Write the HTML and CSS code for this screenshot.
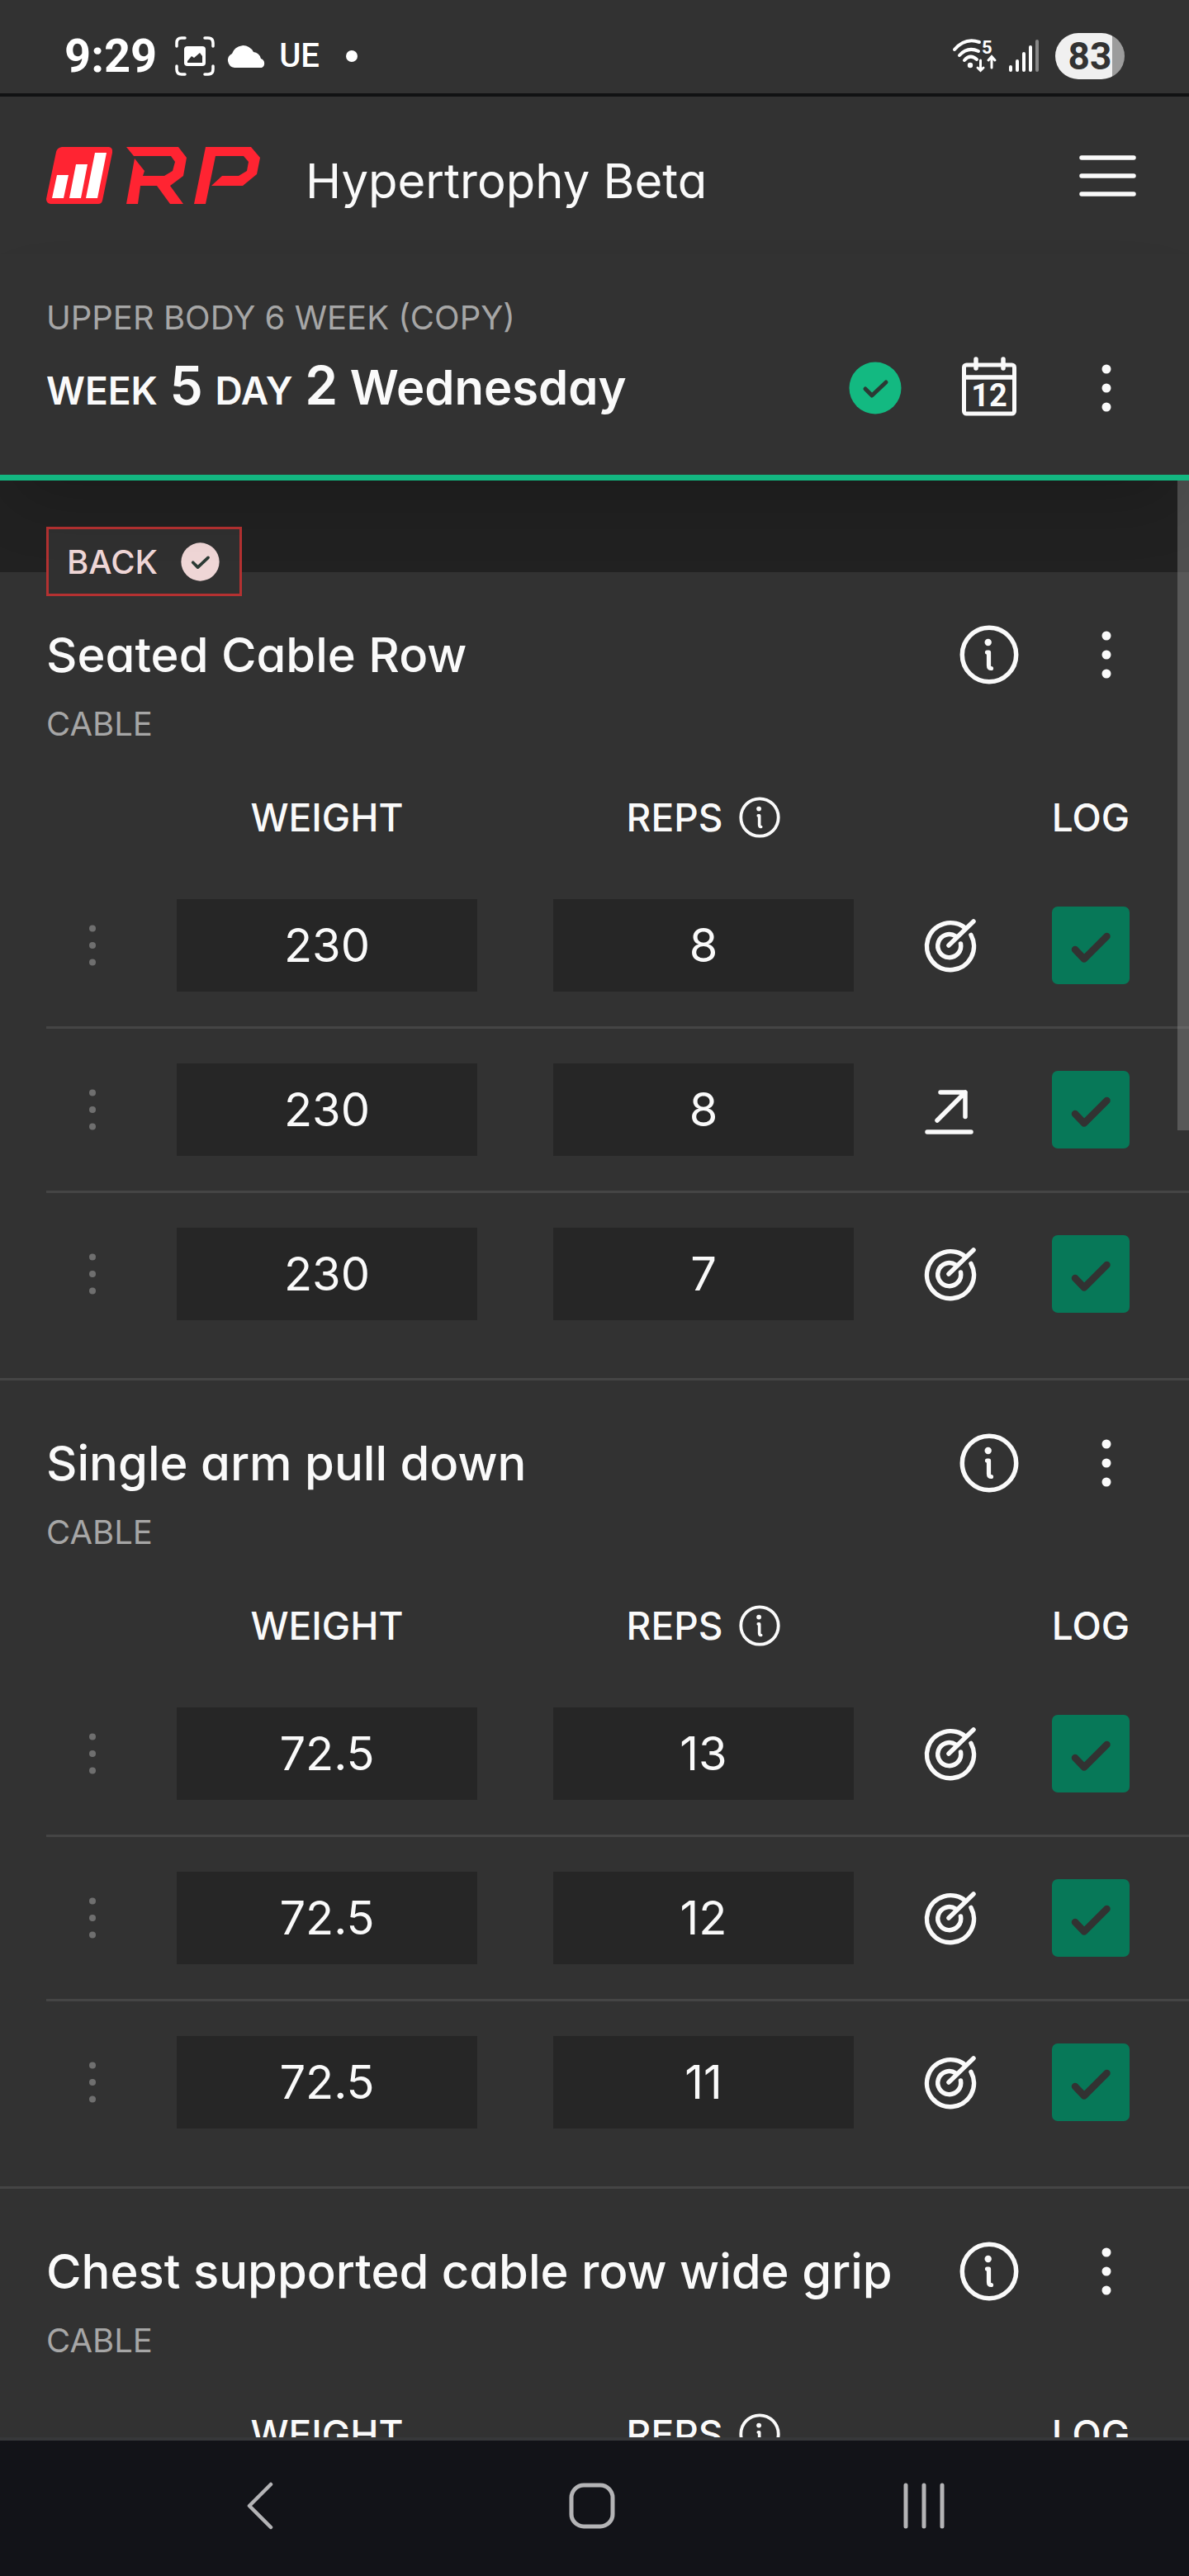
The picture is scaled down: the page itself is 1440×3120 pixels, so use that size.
FILE: index.html
```html
<!DOCTYPE html>
<html lang="en">
<head>
<meta charset="utf-8">
<meta name="viewport" content="width=device-width, initial-scale=1">
<title>Hypertrophy Beta</title>
<link rel="stylesheet" href="styles.css">
</head>
<body>
<svg class="sprite" aria-hidden="true">
  <symbol id="dots" viewBox="0 0 72 72"><g fill="currentColor"><circle cx="36" cy="13" r="5.5"/><circle cx="36" cy="36" r="5.5"/><circle cx="36" cy="59" r="5.5"/></g></symbol>
  <symbol id="grip" viewBox="0 0 56 56"><g fill="currentColor"><circle cx="28" cy="7.500" r="4"/><circle cx="28" cy="28" r="4"/><circle cx="28" cy="48.500" r="4"/></g></symbol>
  <symbol id="info" viewBox="0 0 72 72"><g fill="none" stroke="currentColor" stroke-linecap="round" stroke-linejoin="round"><circle cx="36" cy="36" r="32.700" stroke-width="5.500"/><path d="M33.500 33H35.500V49Q35.500 52.500 38.500 52.500" stroke-width="5.200"/></g><circle cx="34.700" cy="21" r="4.200" fill="currentColor"/></symbol>
  <symbol id="target" viewBox="0 0 72 72"><g fill="none" stroke="currentColor" stroke-width="5.500" stroke-linecap="round"><path d="M55.500 15.500A28.500 28.500 0 1 0 62 23.500"/><path d="M43.500 25A14 14 0 1 0 49.500 34"/><path d="M35 36L65 7"/></g></symbol>
  <symbol id="arrow" viewBox="0 0 72 72"><g fill="none" stroke="currentColor" stroke-width="5.500" stroke-linecap="round" stroke-linejoin="round"><path d="M25 15H55V44.500M55 15L21 49M9 63H62"/></g></symbol>
  <symbol id="tick" viewBox="0 0 94 94"><path d="M28 52L39 63.500L66.500 36" fill="none" stroke="#323232" stroke-width="8.500" stroke-linecap="round" stroke-linejoin="round"/></symbol>
  <symbol id="done" viewBox="0 0 64 64"><circle cx="32" cy="32" r="31.500" fill="currentColor"/><path d="M20 33L28 41L45 25" fill="none" stroke="#2b3a34" stroke-width="5" stroke-linecap="round" stroke-linejoin="round"/></symbol>
</svg>

<div class="status-bar">
  <div class="status-left">
    <span class="clock">9:29</span>
    <svg class="i-shot" width="48" height="48" viewBox="0 0 48 48"><path d="M2 12V8Q2 2 8 2H12M36 2H40Q46 2 46 8V12M46 36V40Q46 46 40 46H36M12 46H8Q2 46 2 40V36" fill="none" stroke="#fff" stroke-width="3.500" stroke-linecap="round"/><rect x="11" y="12" width="26" height="24" rx="4" fill="#fff"/><path d="M15 30L20 24L23 26L30 20L33 24V32H15Z" fill="#323232"/></svg>
    <svg width="50" height="28" viewBox="0 0 50 28"><path d="M10 28A9 9 0 0 1 7 11A14 14 0 0 1 33 9A10 10 0 0 1 42 17A6 6 0 0 1 43 28Z" fill="#fff"/></svg>
    <span class="carrier">UE</span>
    <svg width="14" height="14" viewBox="0 0 14 14"><circle cx="7" cy="7" r="7" fill="#fff"/></svg>
  </div>
  <div class="status-right">
    <svg class="i-wifi" width="54" height="42" viewBox="0 0 54 42"><g fill="none" stroke="#fff" stroke-width="4" stroke-linecap="round"><path d="M2 13Q15 -2 32 4"/><path d="M8 20Q18 9 31 15"/><path d="M14 26Q21 18 29 25"/><path d="M33.500 26V38M30 35L33.500 38.500L37 35M47 35V22M43 26L47 21.500L51 26" stroke-width="3"/></g><circle cx="21" cy="32" r="3.200" fill="#fff"/><text x="35" y="18" class="wifi-band">5</text></svg>
    <svg width="36" height="42" viewBox="0 0 36 42"><g stroke="#fff" stroke-width="4" stroke-linecap="round"><path d="M2 34V38M10 27V38M18 18V38M26 10V38"/><path d="M34 3V38" stroke="#888"/></g></svg>
    <span class="battery">83</span>
  </div>
</div>

<header class="app-header">
  <svg class="logo" width="260" height="70" viewBox="56 178 260 70" role="img" aria-label="RP">
    <g fill="#ff2432">
      <path d="M75 178H132Q137 179 136 185L124 243Q123 247 119 247H61Q56 246 56 241L68 184Q69 179 75 178Z"/>
      <path d="M153 178H216L226 191L222 213L206 225L222 247H206L190 225H170L167 247H153L163 192L175 207L173 213H199L209 207L212 196L207 189H162Z"/>
      <path d="M249 178H304L315 191L311 211L294 225H256L269 213H289L299 207L301 196L295 189H261L249 247H235Z"/>
    </g>
    <path d="M69 212H83L77 240H63ZM92 199H106L98 240H84ZM115 185H129L118 240H104Z" fill="#fff"/>
  </svg>
  <span class="app-name">Hypertrophy Beta</span>
  <button class="icon-btn" aria-label="Menu"><svg viewBox="0 0 72 72"><path d="M6 14H69M6 36H69M6 58H69" stroke="currentColor" stroke-width="5.500" stroke-linecap="round"/></svg></button>
</header>

<section class="workout">
  <p class="caption">UPPER BODY 6 WEEK (COPY)</p>
  <div class="title-row">
    <h1 class="day"><span class="day-label">WEEK</span> <span class="day-number">5</span> <span class="day-label">DAY</span> <span class="day-number">2</span> Wednesday</h1>
    <svg class="complete"><use href="#done"/></svg>
    <button class="icon-btn" aria-label="Calendar"><svg viewBox="0 0 72 72"><rect x="5.500" y="8" width="61" height="59" rx="3" fill="none" stroke="currentColor" stroke-width="5"/><path d="M6 23H66M20 1V12M53 1V12" fill="none" stroke="currentColor" stroke-width="5.500" stroke-linecap="round"/><text x="36" y="58" class="cal-day">12</text></svg></button>
    <button class="icon-btn" aria-label="Workout options"><svg><use href="#dots"/></svg></button>
  </div>
</section>

<main class="exercises">
  <div class="group-band">
    <span class="muscle">BACK <svg class="muscle-done"><use href="#done"/></svg></span>
  </div>

  <section class="exercise">
    <div class="title-row">
      <h2 class="exercise-name">Seated Cable Row</h2>
      <button class="icon-btn" aria-label="About exercise"><svg><use href="#info"/></svg></button>
      <button class="icon-btn" aria-label="Exercise options"><svg><use href="#dots"/></svg></button>
    </div>
    <p class="caption">CABLE</p>
    <table class="sets">
      <thead><tr><td class="c-grip"></td><th>WEIGHT</th><th><span class="reps-head">REPS <svg><use href="#info"/></svg></span></th><td class="c-mark"></td><th class="c-log">LOG</th></tr></thead>
      <tbody>
        <tr><td><svg class="grip"><use href="#grip"/></svg></td><td><input class="field" aria-label="Weight" value="230"></td><td><input class="field" aria-label="Reps" value="8"></td><td><svg class="mark"><use href="#target"/></svg></td><td class="c-log"><label class="log"><input type="checkbox" aria-label="Log set" checked><svg><use href="#tick"/></svg></label></td></tr>
        <tr><td><svg class="grip"><use href="#grip"/></svg></td><td><input class="field" aria-label="Weight" value="230"></td><td><input class="field" aria-label="Reps" value="8"></td><td><svg class="mark"><use href="#arrow"/></svg></td><td class="c-log"><label class="log"><input type="checkbox" aria-label="Log set" checked><svg><use href="#tick"/></svg></label></td></tr>
        <tr><td><svg class="grip"><use href="#grip"/></svg></td><td><input class="field" aria-label="Weight" value="230"></td><td><input class="field" aria-label="Reps" value="7"></td><td><svg class="mark"><use href="#target"/></svg></td><td class="c-log"><label class="log"><input type="checkbox" aria-label="Log set" checked><svg><use href="#tick"/></svg></label></td></tr>
      </tbody>
    </table>
  </section>

  <section class="exercise">
    <div class="title-row">
      <h2 class="exercise-name">Single arm pull down</h2>
      <button class="icon-btn" aria-label="About exercise"><svg><use href="#info"/></svg></button>
      <button class="icon-btn" aria-label="Exercise options"><svg><use href="#dots"/></svg></button>
    </div>
    <p class="caption">CABLE</p>
    <table class="sets">
      <thead><tr><td class="c-grip"></td><th>WEIGHT</th><th><span class="reps-head">REPS <svg><use href="#info"/></svg></span></th><td class="c-mark"></td><th class="c-log">LOG</th></tr></thead>
      <tbody>
        <tr><td><svg class="grip"><use href="#grip"/></svg></td><td><input class="field" aria-label="Weight" value="72.5"></td><td><input class="field" aria-label="Reps" value="13"></td><td><svg class="mark"><use href="#target"/></svg></td><td class="c-log"><label class="log"><input type="checkbox" aria-label="Log set" checked><svg><use href="#tick"/></svg></label></td></tr>
        <tr><td><svg class="grip"><use href="#grip"/></svg></td><td><input class="field" aria-label="Weight" value="72.5"></td><td><input class="field" aria-label="Reps" value="12"></td><td><svg class="mark"><use href="#target"/></svg></td><td class="c-log"><label class="log"><input type="checkbox" aria-label="Log set" checked><svg><use href="#tick"/></svg></label></td></tr>
        <tr><td><svg class="grip"><use href="#grip"/></svg></td><td><input class="field" aria-label="Weight" value="72.5"></td><td><input class="field" aria-label="Reps" value="11"></td><td><svg class="mark"><use href="#target"/></svg></td><td class="c-log"><label class="log"><input type="checkbox" aria-label="Log set" checked><svg><use href="#tick"/></svg></label></td></tr>
      </tbody>
    </table>
  </section>

  <section class="exercise">
    <div class="title-row">
      <h2 class="exercise-name">Chest supported cable row wide grip</h2>
      <button class="icon-btn" aria-label="About exercise"><svg><use href="#info"/></svg></button>
      <button class="icon-btn" aria-label="Exercise options"><svg><use href="#dots"/></svg></button>
    </div>
    <p class="caption">CABLE</p>
    <table class="sets">
      <thead><tr><td class="c-grip"></td><th>WEIGHT</th><th><span class="reps-head">REPS <svg><use href="#info"/></svg></span></th><td class="c-mark"></td><th class="c-log">LOG</th></tr></thead>
    </table>
  </section>
  <div class="scroll-thumb"></div>
</main>

<nav class="system-nav" aria-label="System">
  <button aria-label="Back"><svg viewBox="0 0 60 60"><path d="M43 4L17 30L43 56" fill="none" stroke="currentColor" stroke-width="4.500" stroke-linecap="round" stroke-linejoin="round"/></svg></button>
  <button aria-label="Home"><svg viewBox="0 0 60 60"><rect x="5" y="5" width="50" height="50" rx="15" fill="none" stroke="currentColor" stroke-width="5"/></svg></button>
  <button aria-label="Recent apps"><svg viewBox="0 0 60 60"><path d="M8 5V55M30 5V55M52 5V55" stroke="currentColor" stroke-width="5" stroke-linecap="round"/></svg></button>
</nav>
</body>
</html>
```
FILE: styles.css
```css
* { box-sizing: border-box; }

body {
  margin: 0;
  height: 100vh;
  display: flex;
  flex-direction: column;
  background: #323232;
  color: #fafafa;
  font-family: Inter, "Open Sans", sans-serif;
  /* single-storey a */
  font-feature-settings: "cv11";
}

h1, h2, p { margin: 0; }
svg { display: block; flex: none; }
.sprite { position: absolute; width: 0; height: 0; }

button {
  padding: 0;
  border: 0;
  background: none;
  color: inherit;
}

.icon-btn { flex: none; width: 72px; height: 72px; }
.icon-btn svg { width: 72px; height: 72px; overflow: visible; }

/* status bar */
.status-bar {
  flex: none;
  height: 117px;
  padding: 22px 78px 0 78px;
  border-bottom: 4px solid #111213;
  display: flex;
  justify-content: space-between;
  align-items: center;
  color: #fff;
  font-family: Roboto, sans-serif;
}
.status-left, .status-right { display: flex; align-items: center; gap: 14px; }
.clock { font-size: 56px; font-weight: 700; line-height: 56px; }
.i-shot { margin-left: 8px; }
.carrier { margin-right: 18px; font-size: 40px; font-weight: 500; line-height: 56px; }
.i-wifi { overflow: visible; }
.wifi-band { fill: #fff; font-size: 22px; font-weight: 700; }
.battery {
  width: 84px;
  height: 56px;
  margin-left: 6px;
  border-radius: 28px;
  background: linear-gradient(90deg, #f0f0f0 69px, #9c9c9c 69px);
  color: #323232;
  font-size: 46px;
  font-weight: 700;
  line-height: 56px;
  text-align: center;
}

/* app header */
.app-header {
  flex: none;
  height: 191px;
  padding: 0 64px 0 56px;
  display: flex;
  align-items: center;
}
.app-name {
  flex: 1;
  padding: 12px 0 0 54px;
  font-size: 58px;
  line-height: 72px;
}

/* workout header */
.workout {
  flex: none;
  position: relative;
  z-index: 1;
  padding: 53px 0 69px 56px;
  border-bottom: 7px solid #13b781;
  background: #323232;
  box-shadow: 0 40px 80px -20px rgba(0, 0, 0, 0.2);
}
.caption { font-size: 40px; line-height: 48px; color: #a6a6a6; }
.title-row {
  display: flex;
  align-items: center;
  gap: 70px;
  height: 72px;
  padding-right: 64px;
}
.workout .title-row { margin-top: 25px; }
.day {
  flex: 1;
  font-size: 58px;
  font-weight: 600;
  line-height: 72px;
  white-space: nowrap;
}
.day-label { font-size: 46px; }
.day-number { font-size: 64px; }
.complete { width: 64px; height: 64px; color: #13b981; }
.cal-day {
  fill: currentColor;
  font-family: Roboto, sans-serif;
  font-size: 38px;
  font-weight: 700;
  text-anchor: middle;
}

/* exercise list */
.exercises {
  flex: 1;
  min-height: 0;
  position: relative;
  overflow: hidden;
}
.group-band {
  height: 111px;
  padding: 56px 0 0 56px;
  display: flex;
  background: #212121;
}
.muscle {
  position: relative;
  height: 84px;
  padding: 0 24px 0 22px;
  border: 3px solid #b43131;
  background: #303030;
  display: flex;
  align-items: center;
  gap: 28px;
  color: #efd6d6;
  font-size: 40px;
  font-weight: 500;
}
.muscle-done { width: 47px; height: 47px; }

.exercise {
  padding: 64px 0 28px 56px;
  border-bottom: 3px solid #454545;
}
.exercise .title-row { margin-bottom: 24px; }
.exercise-name {
  flex: 1;
  font-size: 58px;
  font-weight: 500;
  line-height: 68px;
  white-space: nowrap;
}

.sets {
  width: 100%;
  margin-top: 32px;
  table-layout: fixed;
  border-collapse: separate;
  border-spacing: 0;
}
.sets th, .sets td { padding: 0; text-align: center; vertical-align: middle; }
.sets thead tr { height: 114px; }
.sets th { font-size: 46px; font-weight: 500; line-height: 48px; }
.sets tbody td { padding: 42px 0; border-bottom: 3px solid #454545; }
.sets tbody tr:last-child td { border-bottom: 0; }
.sets svg { margin: 0 auto; }
.sets .c-grip { width: 112px; }
.sets .c-mark { width: 140px; }
.sets .c-log { width: 220px; padding-right: 18px; }

.reps-head { display: flex; justify-content: center; align-items: center; gap: 20px; }
.sets .reps-head svg { width: 50px; height: 50px; margin: 0; }
.grip { width: 56px; height: 56px; color: #6f6f6f; }
.mark { width: 72px; height: 72px; }

.field {
  display: block;
  width: calc(100% - 92px);
  height: 112px;
  margin: 0 auto;
  padding: 0;
  border: 0;
  background: #262626;
  color: #fafafa;
  font: inherit;
  font-size: 56px;
  text-align: center;
}

.log { display: inline-grid; vertical-align: top; }
.log input, .log svg { grid-area: 1 / 1; width: 94px; height: 94px; }
.log input {
  appearance: none;
  margin: 0;
  border-radius: 7px;
  background: #077858;
}
.log svg { position: relative; pointer-events: none; }

.scroll-thumb {
  position: absolute;
  top: 0;
  right: 0;
  width: 14px;
  height: 787px;
  background: rgba(140, 140, 140, 0.42);
}

/* system navigation */
.system-nav {
  flex: none;
  height: 168px;
  padding: 0 7px 7px 0;
  border-top: 4px solid #37383a;
  background: #121318;
  color: #b4b4b6;
  display: flex;
  justify-content: center;
  align-items: center;
}
.system-nav button { width: 402px; }
.system-nav svg { width: 60px; height: 60px; margin: 0 auto; }
```
